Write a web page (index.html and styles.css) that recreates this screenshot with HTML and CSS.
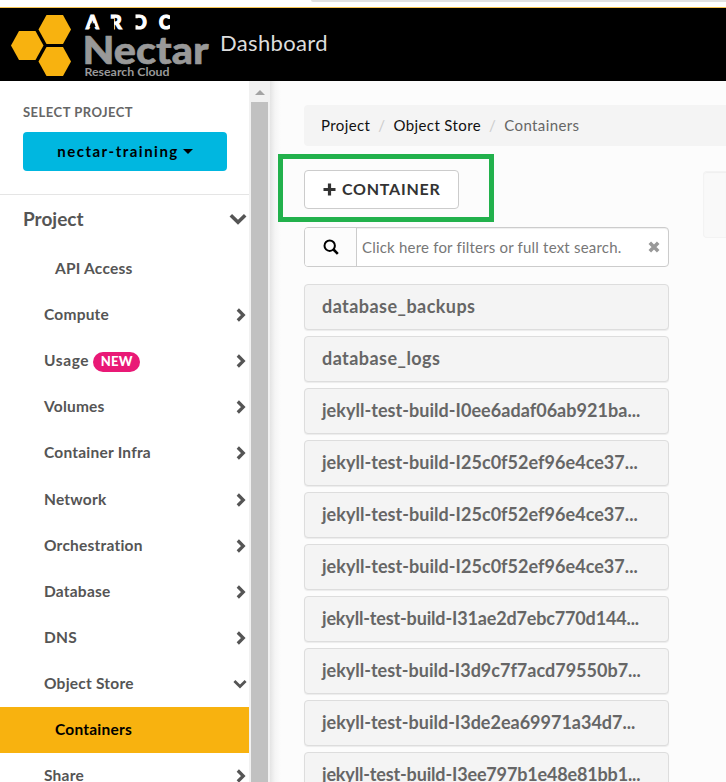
FILE: index.html
```html
<!DOCTYPE html>
<html lang="en">
<head>
<meta charset="utf-8">
<title>Containers - Nectar Dashboard</title>
<link rel="stylesheet" href="styles.css">
</head>
<body>
<svg class="defs" aria-hidden="true">
  <symbol id="right" viewBox="0 0 10 14"><path d="M1.8 1.5 7.3 7l-5.5 5.5" fill="none" stroke="currentColor" stroke-width="3.2"/></symbol>
  <symbol id="down" viewBox="0 0 18 12"><path d="M1.8 2.2 9 9.2l7.2-7" fill="none" stroke="currentColor" stroke-width="3.6"/></symbol>
</svg>
<div class="chrome"><div class="omnibox"></div></div>
<header class="topbar">
  <svg class="logo" viewBox="0 0 210 73" width="210" height="73" role="img">
    <g fill="#f8b20f">
      <path d="M46.500 7h16.500l8 14.500-8 14.500h-16.500l-8-14.500z"/>
      <path d="M19 23h16.500l8 14.500-8 14.500h-16.500l-8-14.500z"/>
      <path d="M46.500 39h16.500l8 14.500-8 14.500h-16.500l-8-14.500z"/>
    </g>
    <text class="ardc" x="86 110 133 159" y="20.800">ARDC</text>
    <path d="M90.800 15.300h3.600l1.200 3.600h-6zM108 10.800h6v11.500h-6zM131 5h4.500v17h-4.500zM134 10.300h5v7h-5zM170 5h4v17h-4z" fill="#000"/>
    <text class="nectar" x="82.500" y="56" textLength="126" lengthAdjust="spacingAndGlyphs">Nectar</text>
    <text class="cloud" x="84.500" y="67.500" textLength="85" lengthAdjust="spacingAndGlyphs">Research Cloud</text>
  </svg>
  <span class="title">Dashboard</span>
</header>
<div class="shell">
  <nav class="sidebar">
    <div class="picker">
      <div class="label">SELECT PROJECT</div>
      <button class="project"><span>nectar-training</span><i class="caret"></i></button>
    </div>
    <div class="row heading"><span>Project</span><svg class="down big"><use href="#down"/></svg></div>
    <div class="row leaf"><span>API Access</span></div>
    <div class="row"><span>Compute</span><svg class="right"><use href="#right"/></svg></div>
    <div class="row"><span class="usage">Usage</span><b class="badge">NEW</b><svg class="right"><use href="#right"/></svg></div>
    <div class="row"><span>Volumes</span><svg class="right"><use href="#right"/></svg></div>
    <div class="row"><span>Container Infra</span><svg class="right"><use href="#right"/></svg></div>
    <div class="row"><span>Network</span><svg class="right"><use href="#right"/></svg></div>
    <div class="row"><span>Orchestration</span><svg class="right"><use href="#right"/></svg></div>
    <div class="row"><span>Database</span><svg class="right"><use href="#right"/></svg></div>
    <div class="row"><span>DNS</span><svg class="right"><use href="#right"/></svg></div>
    <div class="row"><span>Object Store</span><svg class="down"><use href="#down"/></svg></div>
    <div class="row leaf active"><span>Containers</span></div>
    <div class="row"><span>Share</span><svg class="right"><use href="#right"/></svg></div>
  </nav>
  <div class="scrollbar"><div class="arrow"></div><div class="thumb"></div></div>
  <main class="main">
    <div class="crumbs"><a>Project</a><i>/</i><a>Object Store</a><i>/</i><span>Containers</span></div>
    <div class="columns">
      <section class="list">
        <div class="highlight">
          <button class="create"><svg width="13" height="13" viewBox="0 0 13 13"><path d="M6.500 .5v12M.5 6.500h12" stroke="#333" stroke-width="3.200"/></svg><span>CONTAINER</span></button>
        </div>
        <div class="search">
          <div class="lens"><svg width="16" height="16" viewBox="0 0 16 16" fill="none" stroke="#000"><circle cx="6.700" cy="6.700" r="5.200" stroke-width="2"/><path d="M10.500 10.500l4.300 4.300" stroke-width="2.600"/></svg></div>
          <span class="hint">Click here for filters or full text search.</span>
          <svg class="clear" width="12" height="12" viewBox="0 0 12 12"><path d="M1.800 1.800l8.400 8.400M10.200 1.800l-8.400 8.400" stroke="#999" stroke-width="3.600"/></svg>
        </div>
        <div class="item"><span class="wide">database_backups</span></div>
        <div class="item"><span class="wide">database_logs</span></div>
        <div class="item"><span class="loose">jekyll-test-build-I0ee6adaf06ab921ba...</span></div>
        <div class="item"><span class="loose">jekyll-test-build-I25c0f52ef96e4ce37...</span></div>
        <div class="item"><span class="loose">jekyll-test-build-I25c0f52ef96e4ce37...</span></div>
        <div class="item"><span class="loose">jekyll-test-build-I25c0f52ef96e4ce37...</span></div>
        <div class="item"><span class="tight">jekyll-test-build-I31ae2d7ebc770d144...</span></div>
        <div class="item"><span>jekyll-test-build-I3d9c7f7acd79550b7...</span></div>
        <div class="item"><span>jekyll-test-build-I3de2ea69971a34d7...</span></div>
        <div class="item"><span class="tight">jekyll-test-build-I3ee797b1e48e81bb1...</span></div>
      </section>
      <aside class="detail"></aside>
    </div>
  </main>
</div>
</body>
</html>
```
FILE: styles.css
```css
* { box-sizing: border-box; }
html, body { height: 782px; overflow: hidden; }
body { margin: 0; background: #fcfcfc; font: 15px/20px Lato, "Open Sans", sans-serif; color: #555; font-variant-ligatures: none; }
button { font: inherit; padding: 0; margin: 0; }
.defs { display: none; }
.chrome { height: 8px; background: #fff; border-bottom: 1px solid #f5c451; }
.omnibox { margin-left: 311px; height: 2px; background: #e1e1e1; border-bottom-left-radius: 4px; }
.topbar { height: 73px; background: #000; display: flex; }
.logo { flex: none; }
.logo text { font-family: Lato, sans-serif; }
.logo .ardc { font-size: 18px; font-weight: 900; fill: #fff; stroke: #fff; stroke-width: 1.2px; }
.logo .nectar { font-size: 38px; font-weight: 900; fill: #999; stroke: #999; stroke-width: .6px; }
.logo .cloud { font-size: 11.5px; font-weight: 700; fill: #999; }
.title { margin: 21px 0 0 10px; font-size: 22px; line-height: 28px; letter-spacing: .35px; color: #ddd; }
.shell { display: flex; height: 701px; }
.sidebar { width: 249px; flex: none; background: #fff; overflow: hidden; }
.picker { height: 114px; padding: 21px 22px 0 23px; border-bottom: 1px solid #e5e5e5; }
.label { font-size: 13px; font-weight: 700; letter-spacing: .48px; color: #666; }
.project { margin-top: 10px; width: 204px; height: 39px; border: 0; border-radius: 4px; background: #00b7e0; color: #000; font-weight: 700; letter-spacing: 1.5px; display: flex; align-items: center; justify-content: center; padding-bottom: 1px; }
.caret { border: 5px solid transparent; border-top-color: #000; border-bottom: 0; margin-left: 4px; }
.row { height: 46.1px; padding: 0 4px 0 44px; display: flex; align-items: center; font-weight: 700; font-size: 15.5px; letter-spacing: .22px; }
.row span { position: relative; top: -1px; }
.row .usage { letter-spacing: .6px; }
.row svg { margin-left: auto; color: #555; }
.heading { height: 51px; padding: 0 3px 2px 23px; font-size: 19px; letter-spacing: 0; }
.heading svg { position: relative; top: -1px; }
.leaf { padding-left: 55px; }
.active { background: #f8b20f; color: #000; }
.right { width: 10px; height: 14px; }
.row .right { margin-right: -1px; }
.down { width: 14px; height: 10px; margin-right: -2px; }
.down.big { width: 18px; height: 12px; margin-right: -1px; }
.badge { margin: 2px 0 0 4px; width: 47px; height: 20px; border-radius: 10px; background: #e91976; color: #fff; font-size: 13px; line-height: 19px; font-weight: 900; text-align: center; }
.scrollbar { width: 21px; flex: none; background: #f1f1f1; padding: 9px 2px 0; }
.arrow { width: 10px; margin: 0 auto 7px; border: 5px solid transparent; border-top: 0; border-bottom-color: #a3a3a3; }
.thumb { height: 700px; background: #c1c1c1; }
.main { flex: 1; min-width: 0; padding: 24px 0 0 34px; background: linear-gradient(90deg, #e4e4e4, #f5f5f5 5px, #fcfcfc 11px); overflow: hidden; }
.crumbs { height: 41px; padding: 0 0 1px 17px; display: flex; align-items: center; background: #f4f4f4; border-radius: 4px 0 0 4px; color: #666; letter-spacing: .38px; }
.crumbs a { color: #111; }
.crumbs i { width: 23.3px; text-align: center; font-style: normal; color: #ccc; }
.columns { display: flex; }
.list { width: 365px; flex: none; }
.highlight { margin: 8px 0 5px -26px; width: 216px; height: 68px; border: 5px solid #22b14c; padding: 11px 0 0 21px; }
.create { width: 155px; height: 39px; border: 1px solid #ccc; border-radius: 4px; background: #fff; color: #333; font-size: 16px; font-weight: 700; display: flex; align-items: center; padding: 0 0 1px 18px; letter-spacing: .75px; }
.create span { margin-left: 6px; }
.search { height: 40px; border: 1px solid #ccc; border-radius: 4px; background: #fff; display: flex; align-items: center; margin-bottom: 17px; box-shadow: inset 0 1px 1px #0001; }
.lens { width: 52px; height: 38px; border-right: 1px solid #ccc; display: flex; align-items: center; justify-content: center; background: #fcfcfc; border-radius: 3px 0 0 3px; }
.hint { margin-left: 5px; letter-spacing: .2px; color: #777; }
.clear { margin: 0 8px 0 auto; }
.item { height: 46px; margin-bottom: 6px; border: 1px solid #ddd; border-radius: 4px; background: #f4f4f4; box-shadow: 0 1px 1px #0001; padding: 11px 17px; font-size: 18px; font-weight: 700; color: #666; white-space: nowrap; }
.wide { letter-spacing: .45px; }
.loose { letter-spacing: .04px; }
.tight { letter-spacing: -.16px; }
.detail { margin: 25px 0 0 34px; flex: 1; height: 67px; background: #f9f9f9; border: 1px solid #f3f3f3; border-right: 0; border-radius: 4px 0 0 4px; box-shadow: inset 0 1px 1px #0000000a; }
```
